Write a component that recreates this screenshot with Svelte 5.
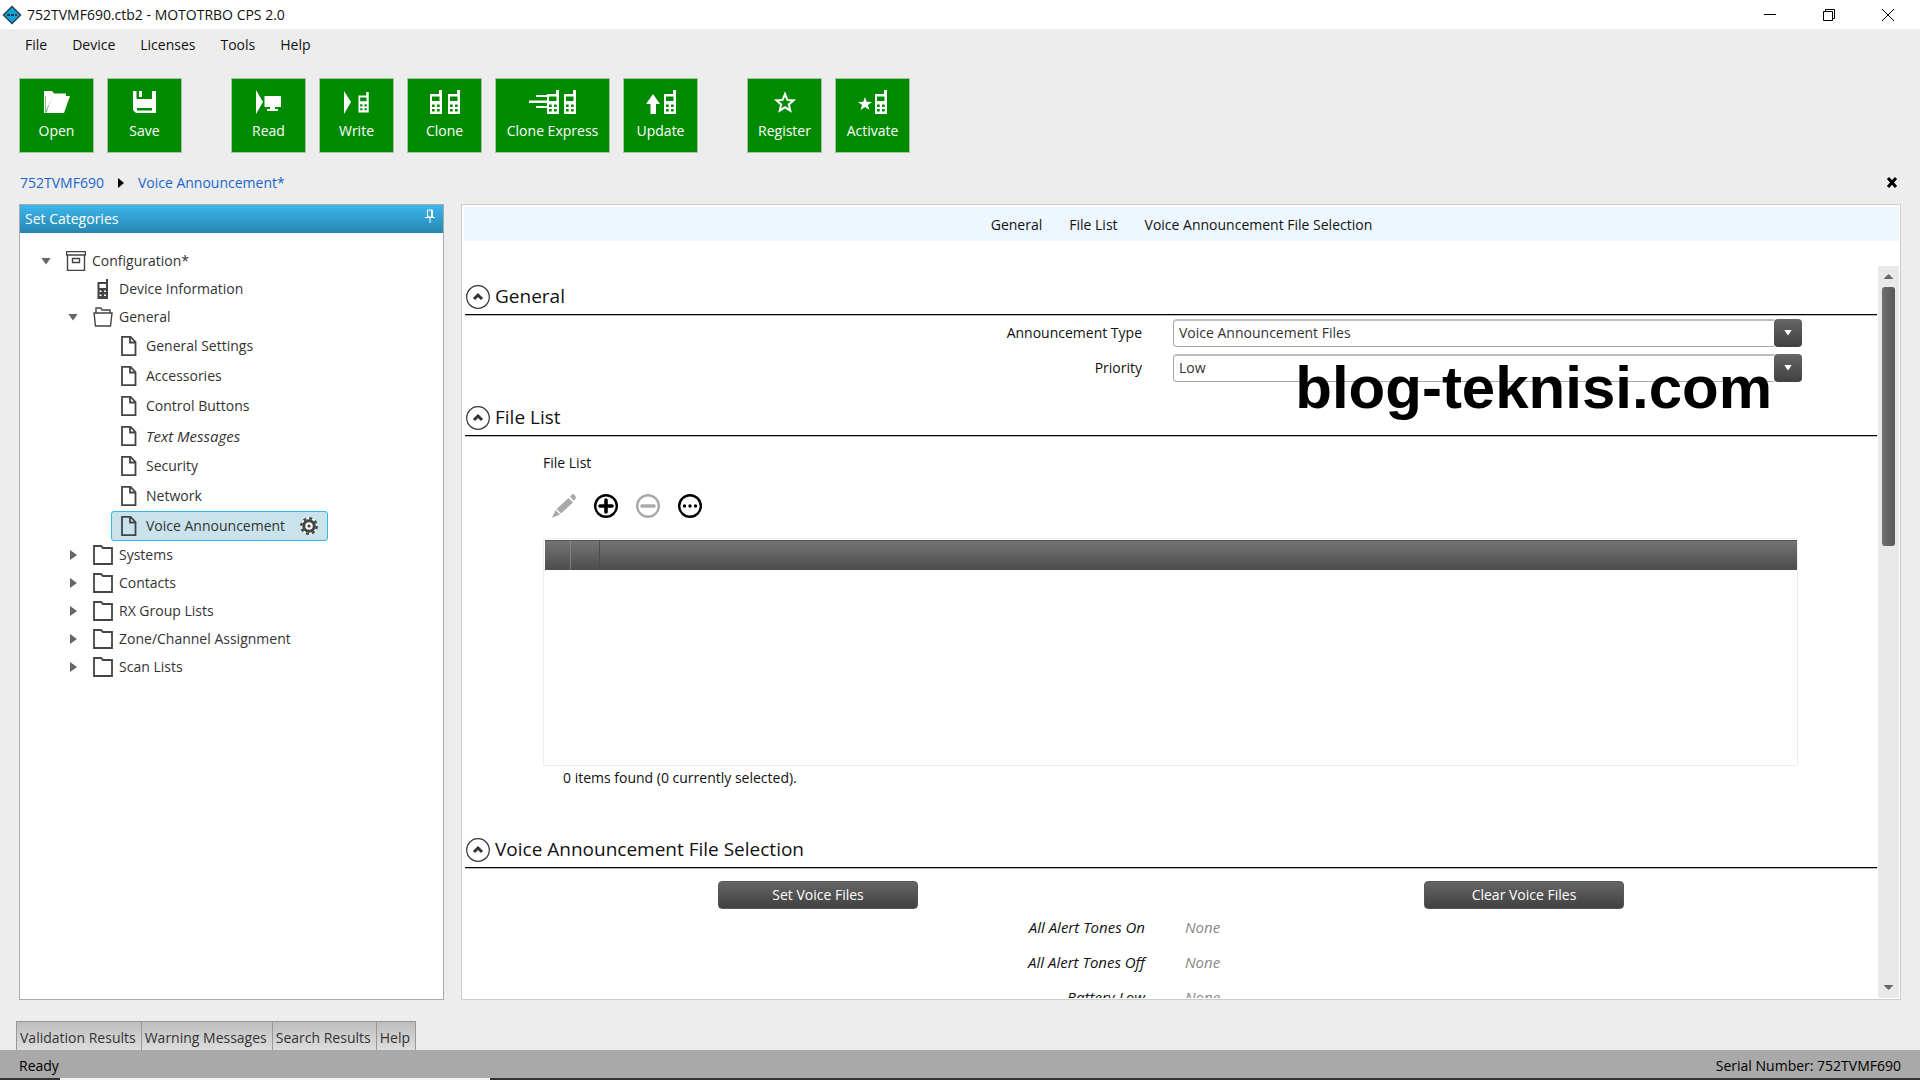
<script>
  let announcementType = $state("Voice Announcement Files");
  let priority = $state("Low");
  let selected = $state("Voice Announcement");

  const menus = ["File", "Device", "Licenses", "Tools", "Help"];

  const toolbar = [
    ["Open", "Save"],
    ["Read", "Write", "Clone", "Clone Express", "Update"],
    ["Register", "Activate"],
  ];

  const tree = [
    { label: "Configuration*", level: 0, icon: "box", state: "open" },
    { label: "Device Information", level: 1, icon: "radio" },
    { label: "General", level: 1, icon: "folderOpen", state: "open" },
    { label: "General Settings", level: 2, icon: "page" },
    { label: "Accessories", level: 2, icon: "page" },
    { label: "Control Buttons", level: 2, icon: "page" },
    { label: "Text Messages", level: 2, icon: "page", italic: true },
    { label: "Security", level: 2, icon: "page" },
    { label: "Network", level: 2, icon: "page" },
    { label: "Voice Announcement", level: 2, icon: "page" },
    { label: "Systems", level: 1, icon: "folder", state: "closed" },
    { label: "Contacts", level: 1, icon: "folder", state: "closed" },
    { label: "RX Group Lists", level: 1, icon: "folder", state: "closed" },
    { label: "Zone/Channel Assignment", level: 1, icon: "folder", state: "closed" },
    { label: "Scan Lists", level: 1, icon: "folder", state: "closed" },
  ];

  const links = ["General", "File List", "Voice Announcement File Selection"];
  const tones = ["All Alert Tones On", "All Alert Tones Off", "Battery Low"];
  const tabs = ["Validation Results", "Warning Messages", "Search Results", "Help"];
</script>

{#snippet phone(x)}
  <path
    transform="translate({x} 0)"
    fill-rule="evenodd"
    d="M0 4H9V0H12V24H0ZM2 6.5V11H9.5V6.5ZM2 14.5V17H4.7V14.5ZM7 14.5V17H9.7V14.5ZM2 19V21.5H4.7V19ZM7 19V21.5H9.7V19Z" />
{/snippet}

{#snippet toolIcon(name)}
  {#if name === "Open"}
    <svg width="26" height="24" viewBox="0 0 26 24">
      <path d="M0 1H8L10 3.500H22V6H9L2 21V6H1.500V23H0Z" />
      <path d="M8.500 6H26L20 23H2Z" />
    </svg>
  {:else if name === "Save"}
    <svg width="23" height="24" viewBox="0 0 23 24">
      <path fill-rule="evenodd" d="M0 1H3.500V9H19V1H23V23H3L0 20ZM4 18V20.500H19V18Z" />
      <path d="M6 1H9V7H6Z" />
    </svg>
  {:else if name === "Read"}
    <svg width="25" height="24" viewBox="0 0 25 24">
      <path d="M0 0L7 12L0 24ZM8.500 6H25V17H19V19H22V21H11V19H14V17H8.500Z" />
    </svg>
  {:else if name === "Write"}
    <svg width="25" height="24" viewBox="0 0 25 24">
      <path d="M0 1L7 12L0 24Z" />
      <g transform="translate(14.500 2) scale(.85)">{@render phone(0)}</g>
    </svg>
  {:else if name === "Clone"}
    <svg width="30" height="24" viewBox="0 0 30 24">
      {@render phone(0)}
      {@render phone(18)}
    </svg>
  {:else if name === "Clone Express"}
    <svg width="47" height="24" viewBox="0 0 47 24">
      <path d="M7 5H18V7H7ZM0 10.500H18V13H0ZM7 16H18V18H7Z" />
      {@render phone(18)}
      {@render phone(35)}
    </svg>
  {:else if name === "Update"}
    <svg width="30" height="24" viewBox="0 0 30 24">
      <path d="M7 4L14 14H10V24H4.500V14H0Z" />
      {@render phone(18)}
    </svg>
  {:else if name === "Register"}
    <svg width="24" height="24" viewBox="0 0 24 24">
      <path
        class="outline"
        d="M12 4L14.400 9.900L20.600 10.400L15.800 14.400L17.300 20.600L12 17.300L6.700 20.600L8.200 14.400L3.400 10.400L9.600 9.900Z" />
    </svg>
  {:else}
    <svg width="29" height="24" viewBox="0 0 29 24">
      <path d="M7 7L8.700 11.700L14 12L9.900 15L11.500 20L7 17L2.500 20L4.100 15L0 12L5.300 11.700Z" />
      {@render phone(17)}
    </svg>
  {/if}
{/snippet}

{#snippet treeIcon(name)}
  <svg class="tree-icon" width="20" height="20" viewBox="0 0 20 20">
    {#if name === "box"}
      <path d="M.500 .500H19.500V4H.500ZM1.500 4V19.500H18.500V4M6.500 7.500H13.500V11.500H6.500Z" />
    {:else if name === "radio"}
      <path
        class="solid"
        d="M4.500 3H13V0H15V20H4.500ZM6.500 5V9H13V5ZM6.500 11.500V13H8.500V11.500ZM11 11.500V13H13V11.500ZM6.500 15.500V17H8.500V15.500ZM11 15.500V17H13V15.500Z" />
    {:else if name === "folderOpen"}
      <path d="M1 6H19L17.500 19H2.500ZM3 6V1H8L9 3H17V6" />
    {:else if name === "folder"}
      <path class="thick" d="M1 1H8L10 3H19V19H1Z" />
    {:else}
      <path d="M2 .800H10.500L15.500 6V19.200H2ZM10 .800V6.500H15.500" class="thick" />
    {/if}
  </svg>
{/snippet}

{#snippet heading(text)}
  <header class="section-head">
    <button class="collapse" aria-label="Collapse {text}">
      <svg width="24" height="24" viewBox="0 0 24 24">
        <circle cx="12" cy="12" r="11.300" />
        <path d="M8 14L12 10L16 14" />
      </svg>
    </button>
    <h2>{text}</h2>
  </header>
{/snippet}

<div class="window">
  <div class="titlebar">
    <svg width="20" height="20" viewBox="0 0 20 20">
      <path d="M10 .500L19.500 10L10 19.500L.500 10Z" fill="#263c4a" />
      <path d="M10 2.500L17.500 10L10 17.500L2.500 10Z" fill="#12a5dc" />
      <path d="M5 10H8M9 10H12M13 10H15" stroke="#163d52" stroke-width="2" />
    </svg>
    <span class="title">752TVMF690.ctb2 - MOTOTRBO CPS 2.0</span>
    <button aria-label="Minimize">
      <svg width="12" height="12" viewBox="0 0 12 12"><path d="M0 5.500H12" /></svg>
    </button>
    <button aria-label="Restore">
      <svg width="12" height="12" viewBox="0 0 12 12"><path d="M.500 2.500H9.500V11.500H.500ZM2.500 2.500V.500H11.500V9.500H9.500" /></svg>
    </button>
    <button aria-label="Close window">
      <svg width="12" height="12" viewBox="0 0 12 12"><path d="M0 0L12 12M12 0L0 12" /></svg>
    </button>
  </div>

  <nav class="menubar">
    {#each menus as menu}
      <button>{menu}</button>
    {/each}
  </nav>

  <div class="toolbar">
    {#each toolbar as group}
      <div class="group">
        {#each group as tool}
          <button class="tool" class:wide={tool === "Clone Express"}>
            {@render toolIcon(tool)}
            <span>{tool}</span>
          </button>
        {/each}
      </div>
    {/each}
  </div>

  <div class="crumbs">
    <a href="#device">752TVMF690</a>
    <svg width="6" height="10" viewBox="0 0 6 10"><path d="M0 0L6 5L0 10Z" /></svg>
    <a href="#voice">Voice Announcement*</a>
    <button class="close" aria-label="Close">
      <svg width="12" height="12" viewBox="0 0 12 12"><path d="M2 1L10 10M10 1L2 10" /></svg>
    </button>
  </div>

  <main>
    <aside>
      <div class="aside-head">
        <span>Set Categories</span>
        <button aria-label="Pin">
          <svg width="10" height="14" viewBox="0 0 10 14">
            <path d="M2.500 1H7.500V8H2.500ZM0 8.500H10M5 8V14M6.500 1V8" />
          </svg>
        </button>
      </div>
      <ul class="tree">
        {#each tree as node}
          <li class="level{node.level}" class:leaf={node.level === 2}>
            <span class="twisty {node.state}"></span>
            <button
              class="node"
              class:selected={selected === node.label}
              class:italic={node.italic}
              onclick={() => (selected = node.label)}>
              {@render treeIcon(node.icon)}
              <span>{node.label}</span>
              {#if selected === node.label}
                <svg class="gear" width="20" height="20" viewBox="0 0 20 20">
                  <circle cx="10" cy="10" r="8.500" class="halo" />
                  <circle cx="10" cy="10" r="7.700" class="teeth" />
                  <circle cx="10" cy="10" r="5.300" class="ring" />
                  <circle cx="10" cy="10" r="1.600" class="hub" />
                </svg>
              {/if}
            </button>
          </li>
        {/each}
      </ul>
    </aside>

    <section class="content">
      <nav class="links">
        {#each links as link}
          <a href="#{link}">{link}</a>
        {/each}
      </nav>

      <div class="scroller">
        <div class="sheet">
          <section class="general">
            {@render heading("General")}
            <div class="row">
              <label for="type">Announcement Type</label>
              <div class="combo">
                <select id="type" bind:value={announcementType}>
                  <option>Voice Announcement Files</option>
                </select>
                <span class="drop"></span>
              </div>
            </div>
            <div class="row">
              <label for="priority">Priority</label>
              <div class="combo">
                <select id="priority" bind:value={priority}>
                  <option>Low</option>
                </select>
                <span class="drop"></span>
              </div>
            </div>
            <div class="watermark">blog-teknisi.com</div>
          </section>

          <section class="files">
            {@render heading("File List")}
            <div class="list">
              <p class="caption">File List</p>
              <div class="actions">
                <button aria-label="Edit" disabled>
                  <svg width="24" height="24" viewBox="0 0 24 24">
                    <path class="fill" d="M4.500 15L16.500 4L21 8.500L9 19.500ZM3.500 16L8 20.500L0 24ZM18 2.500L19.500 1Q21 -1 23 1.500Q25 3.500 22.500 6L21.800 7Z" />
                  </svg>
                </button>
                <button aria-label="Add">
                  <svg width="24" height="24" viewBox="0 0 24 24">
                    <circle cx="12" cy="12" r="10.800" />
                    <path d="M12 6V18M6 12H18" class="sign" />
                  </svg>
                </button>
                <button aria-label="Remove" disabled>
                  <svg width="24" height="24" viewBox="0 0 24 24">
                    <circle cx="12" cy="12" r="10.800" />
                    <path d="M6 12H18" class="sign" />
                  </svg>
                </button>
                <button aria-label="More">
                  <svg width="24" height="24" viewBox="0 0 24 24">
                    <circle cx="12" cy="12" r="10.800" />
                    <path d="M6.500 12H6.500M12 12H12M17.500 12H17.500" class="dots" />
                  </svg>
                </button>
              </div>
              <div class="table-box">
                <table>
                  <thead>
                    <tr><th class="narrow"></th><th class="mid"></th><th></th></tr>
                  </thead>
                </table>
              </div>
              <p class="count">0 items found (0 currently selected).</p>
            </div>
          </section>

          <section>
            {@render heading("Voice Announcement File Selection")}
            <div class="file-buttons">
              <button>Set Voice Files</button>
              <button>Clear Voice Files</button>
            </div>
            {#each tones as tone}
              <div class="row tone">
                <span class="name">{tone}</span>
                <span class="value">None</span>
              </div>
            {/each}
          </section>
        </div>

        <div class="scrollbar">
          <span class="up"></span>
          <span class="thumb"></span>
          <span class="down"></span>
        </div>
      </div>
    </section>
  </main>

  <div class="tabs">
    {#each tabs as tab}
      <button>{tab}</button>
    {/each}
  </div>

  <footer>
    <span>Ready</span>
    <span>Serial Number: 752TVMF690</span>
  </footer>
  <div class="taskbar"><i></i><i class="field"></i><i class="rest"></i></div>
</div>

<style>
  :global(body) {
    background: #ededed;
  }

  .window {
    display: flex;
    flex-direction: column;
    height: 100vh;
    font: 14px/20px "Segoe UI", "Open Sans", sans-serif;
    color: #111;
  }

  button {
    padding: 0;
    border: 0;
    background: none;
    font: inherit;
    color: inherit;
  }

  a {
    color: inherit;
    text-decoration: none;
  }

  svg {
    display: block;
    flex: none;
  }

  p,
  h2 {
    margin: 0;
  }

  /* title and menu */
  .titlebar {
    display: flex;
    align-items: center;
    height: 29px;
    padding: 0 3px 0 2px;
    background: #fff;
  }
  .title {
    flex: 1;
    margin-left: 5px;
  }
  .titlebar button {
    display: grid;
    place-items: center;
    width: 59px;
    height: 28px;
  }
  .titlebar button path {
    fill: none;
    stroke: #000;
  }

  .menubar {
    display: flex;
    gap: 25px;
    height: 31px;
    padding-left: 25px;
  }

  /* toolbar */
  .toolbar {
    display: flex;
    gap: 49px;
    padding: 18px 19px 0;
  }
  .group {
    display: flex;
    gap: 13px;
  }
  .tool {
    display: flex;
    flex-direction: column;
    align-items: center;
    gap: 7px;
    width: 75px;
    height: 75px;
    padding-top: 11px;
    border: 1px solid #a5c5a5;
    background: #008a00;
    color: #fff;
  }
  .tool.wide {
    width: 115px;
  }
  .tool svg {
    fill: #fff;
  }
  .tool .outline {
    fill: none;
    stroke: #fff;
    stroke-width: 2;
  }

  .crumbs {
    display: flex;
    align-items: center;
    gap: 14px;
    height: 51px;
    padding: 8px 22px 0 20px;
    box-sizing: border-box;
    color: #1a66cc;
  }
  .crumbs svg {
    fill: #000;
  }
  .close {
    margin-left: auto;
  }
  .close path {
    stroke: #000;
    stroke-width: 3;
  }

  main {
    display: flex;
    flex: 1;
    gap: 17px;
    min-height: 0;
    padding: 0 19px;
  }

  /* categories */
  aside {
    width: 425px;
    box-sizing: border-box;
    border: 1px solid #a9a9a9;
    background: #fff;
  }
  .aside-head {
    display: flex;
    align-items: flex-start;
    justify-content: space-between;
    height: 28px;
    padding: 4px 8px 0 5px;
    box-sizing: border-box;
    background: linear-gradient(#3bb6ec, #2686b1);
    color: #fff;
  }
  .aside-head path {
    fill: none;
    stroke: #fff;
  }
  .tree {
    margin: 0;
    padding: 14px 0 0 20px;
    list-style: none;
    color: #333;
  }
  .tree li {
    display: flex;
    align-items: center;
    height: 28px;
  }
  .tree .leaf {
    height: 30px;
  }
  .level1 {
    padding-left: 27px;
  }
  .level2 {
    padding-left: 54px;
  }
  .twisty {
    width: 17px;
  }
  .twisty.open::before,
  .twisty.closed::before {
    content: "";
    display: block;
    width: 10px;
    height: 7px;
    margin-left: 1px;
    background: #666;
    clip-path: polygon(0 0, 100% 0, 50% 100%);
  }
  .twisty.closed::before {
    width: 7px;
    height: 10px;
    margin-left: 3px;
    clip-path: polygon(0 0, 100% 50%, 0 100%);
  }
  .node {
    display: flex;
    align-items: center;
    height: 100%;
    box-sizing: border-box;
    gap: 6px;
    padding: 0 8px;
    border: 1px solid transparent;
    border-radius: 3px;
  }
  .selected {
    border-color: #36b5ea;
    background: #c9e3ed;
  }
  .italic,
  .tone {
    font-size: 15px;
    font-style: italic;
  }
  .tree-icon {
    fill: none;
    stroke: #444;
    stroke-width: 1.4;
  }
  .tree-icon .thick {
    stroke-width: 1.8;
  }
  .tree-icon .solid {
    fill: #444;
    fill-rule: evenodd;
    stroke: none;
  }
  .gear {
    margin-left: 8px;
    fill: none;
    stroke: #444;
  }
  .halo {
    fill: #f4f9fb;
    stroke: none;
  }
  .teeth {
    stroke-width: 2.4;
    stroke-dasharray: 3 3.05;
  }
  .ring {
    stroke-width: 3;
  }
  .hub {
    fill: #444;
    stroke: none;
  }

  /* form */
  .content {
    display: flex;
    flex-direction: column;
    flex: 1;
    min-width: 0;
    padding: 2px 1px 1px 2px;
    border: 1px solid #ccc;
    background: #fff;
  }
  .links {
    display: flex;
    align-items: center;
    justify-content: center;
    gap: 27px;
    height: 34px;
    padding-top: 1px;
    box-sizing: border-box;
    background: #eef7ff;
  }
  .scroller {
    display: flex;
    flex: 1;
    min-height: 0;
    margin-top: 25px;
  }
  .sheet {
    flex: 1;
    overflow: hidden;
    padding: 16px 1px 0;
  }
  .section-head {
    display: flex;
    align-items: center;
    gap: 5px;
    height: 32px;
    padding: 0 0 3px 1px;
    box-sizing: border-box;
    border-bottom: 1px solid #000;
    box-shadow: 0 1px #bbb;
  }
  .collapse circle {
    fill: none;
    stroke: #333;
    stroke-width: 1.2;
  }
  .collapse path {
    fill: none;
    stroke: #333;
    stroke-width: 3;
  }
  h2 {
    padding-bottom: 3px;
    font-size: 19px;
    line-height: 24px;
    font-weight: 400;
  }
  .row {
    display: grid;
    grid-template-columns: 1fr 1fr;
    align-items: center;
    height: 35px;
  }
  .row label,
  .name {
    padding-right: 29px;
    text-align: right;
  }
  .combo {
    display: flex;
    height: 28px;
    margin: 0 75px 0 2px;
  }
  select {
    flex: 1;
    padding: 0 5px;
    appearance: none;
    border: 1px solid #a9a9a9;
    border-top: 2px solid #bdbdbd;
    border-right: 0;
    border-radius: 4px 0 0 4px;
    background: #fff;
    color: #333;
    font: inherit;
  }
  .drop {
    display: grid;
    place-items: center;
    width: 28px;
    border-radius: 4px;
    background: linear-gradient(#666, #404040);
  }
  .drop::before {
    content: "";
    width: 8px;
    height: 6px;
    background: #fff;
    clip-path: polygon(0 0, 100% 0, 50% 100%);
  }

  .general {
    position: relative;
    height: 121px;
    padding-top: 1px;
    box-sizing: border-box;
  }
  .watermark {
    position: absolute;
    top: 72px;
    right: 105px;
    font: bold 60px/68px "Liberation Sans", Arial, sans-serif;
    color: #000;
    pointer-events: none;
  }
  .files {
    padding-top: 1px;
  }

  .list {
    padding: 17px 79px 48px 78px;
  }
  .caption {
    padding-bottom: 21px;
  }
  .actions {
    display: flex;
    gap: 18px;
    padding: 0 0 20px 9px;
    color: #000;
  }
  .actions button:disabled {
    color: #aaa;
  }
  .actions svg {
    fill: none;
    stroke: currentColor;
    stroke-width: 2.4;
  }
  .actions .fill {
    fill: currentColor;
    stroke: none;
  }
  .actions .sign {
    stroke-width: 3.6;
    stroke-linecap: round;
  }
  .actions .dots {
    stroke-width: 3.4;
    stroke-linecap: round;
  }
  .table-box {
    height: 225px;
    padding: 1px 0 0 1px;
    border: 1px solid #eee;
  }
  table {
    width: 100%;
    height: 30px;
    border-collapse: collapse;
    background: linear-gradient(#757575, #4c4c4c);
  }
  th {
    padding: 0;
    border-top: 1px solid #505050;
    border-bottom: 1px solid #505050;
  }
  .narrow {
    width: 25px;
    border-right: 1px solid #808080;
  }
  .mid {
    width: 28px;
    border-right: 1px solid #4d4d4d;
  }
  .count {
    padding: 2px 0 0 20px;
  }

  .file-buttons {
    display: grid;
    grid-template-columns: 1fr 1fr;
    justify-items: center;
    padding: 13px 0 0;
  }
  .file-buttons button {
    width: 200px;
    height: 28px;
    border: 1px solid #555;
    border-radius: 4px;
    background: linear-gradient(#666, #404040);
    color: #fff;
  }
  .tone .name {
    padding-right: 26px;
  }
  .value {
    padding-left: 14px;
    color: #888;
  }

  .scrollbar {
    display: flex;
    flex-direction: column;
    align-items: center;
    width: 21px;
    padding: 8px 0;
    box-sizing: border-box;
    background: #e9e9e9;
  }
  .up,
  .down {
    width: 10px;
    height: 5px;
    background: #666;
    clip-path: polygon(50% 0, 100% 100%, 0 100%);
  }
  .down {
    margin-top: auto;
    clip-path: polygon(0 0, 100% 0, 50% 100%);
  }
  .thumb {
    width: 13px;
    height: 259px;
    margin-top: 8px;
    border-radius: 3px;
    background: linear-gradient(90deg, #707070, #585858);
  }

  /* bottom */
  .tabs {
    display: flex;
    padding: 21px 16px 0;
  }
  .tabs button {
    height: 29px;
    padding: 3px 5px 0 3px;
    border: 1px solid #999;
    border-bottom: 0;
    background: linear-gradient(#bdbdbd, #dedede);
    color: #333;
  }
  .tabs button + button {
    border-left: 0;
  }
  footer {
    display: flex;
    align-items: center;
    justify-content: space-between;
    height: 28px;
    padding: 3px 19px 0;
    box-sizing: border-box;
    background: #a9a9a9;
    color: #000;
  }
  .taskbar {
    display: flex;
    height: 2px;
  }
  .taskbar i {
    width: 60px;
    background: #333;
  }
  .taskbar .field {
    width: 430px;
    background: #f2f2f2;
  }
  .taskbar .rest {
    flex: 1;
  }
</style>
